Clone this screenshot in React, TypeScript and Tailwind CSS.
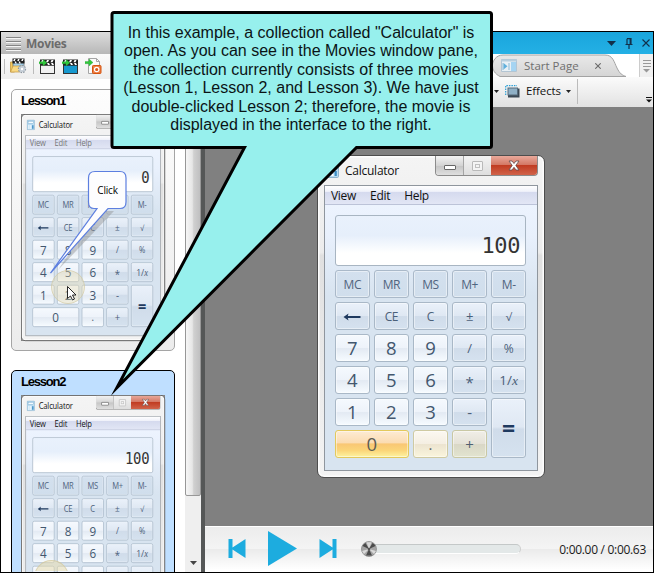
import React from "react";

const UI = "font-['Open_Sans','Noto_Sans',sans-serif]";

type Tone = "memory" | "digit" | "op" | "hot" | "warm" | "warmOp";

const tones: Record<Tone, string> = {
  memory: "border-[#aab9c9] bg-[linear-gradient(#d3e0ee,#d0deec)] text-[#51657f]",
  digit: "border-[#a9b8c7] bg-[linear-gradient(#f5f9fe_0%,#eef3fa_48%,#e3eaf3_52%,#f6fbff_100%)] text-[#43576e]",
  op: "border-[#a9b8c7] bg-[linear-gradient(#eaf1fa_0%,#dfe8f3_48%,#d0dcea_52%,#d5e2ef_100%)] text-[#4b6079]",
  hot: "border-[#e3c95c] bg-[linear-gradient(#fdebd3_0%,#fbdcb2_45%,#f9c774_50%,#fbd579_75%,#fdf3a0_100%)] text-[#5d5c54]",
  warm: "border-[#cfcaa2] bg-[linear-gradient(#fbf8f1_0%,#f5efe3_48%,#ece4d0_52%,#faf5dc_100%)] text-[#5c6468]",
  warmOp: "border-[#c9c8a4] bg-[linear-gradient(#f0eee7_0%,#e5e2d7_48%,#d9d7c6_52%,#e2e4cf_100%)] text-[#4f6070]",
};

function Key({ children, tone, className = "" }: { children: React.ReactNode; tone: Tone; className?: string }) {
  return (
    <div className={`flex min-w-0 items-center justify-center rounded-[3px] border-[1.5px] pt-[1px] font-medium shadow-[inset_0_0_0_1px_rgba(255,255,255,0.45)] leading-none ${tones[tone]} ${className}`}>
      {children}
    </div>
  );
}

function BackArrow() {
  return (
    <svg width="18" height="8" viewBox="0 0 18 8">
      <path d="M0.5 4 L5.5 0.5 L4.8 3 H17.5 V5 H4.8 L5.5 7.5 Z" fill="#1f3a5f" />
    </svg>
  );
}

function CalcIcon() {
  return (
    <svg width="13" height="15" viewBox="0 0 13 15">
      <rect x="0.5" y="0.5" width="12" height="14" rx="1.2" fill="#b9dcf2" stroke="#8fb3cb" />
      <rect x="2.2" y="2.2" width="8.6" height="3.6" fill="#f4fbff" stroke="#6fa7cc" strokeWidth="0.7" />
      <path d="M2.5 8h2v2h-2zM5.5 8h2v2h-2zM2.5 11h2v2h-2zM5.5 11h2v2h-2z" fill="#fff" />
      <path d="M8.6 8h2.2v5H8.6z" fill="#3e8ec4" />
    </svg>
  );
}

function WindowButtons({ active }: { active: boolean }) {
  return (
    <div className="flex h-[20px] w-[103px] rounded-b-[4px] border border-t-0 border-[#8b8b8b] overflow-hidden">
      <div className="flex w-[28px] items-center justify-center border-r border-[#a5a5a5] bg-[linear-gradient(#f3f3f3,#d4d4d4_50%,#c5c5c5_52%,#dfdfdf)]">
        <div className="mt-[3px] h-[5px] w-[12px] rounded-[1px] border border-[#666] bg-white" />
      </div>
      <div className="flex w-[27px] items-center justify-center bg-[linear-gradient(#f3f3f3,#dedede)]">
        <div className="h-[10px] w-[11px] rounded-[1px] border border-[#b9b9b9] bg-[#f4f4f4] p-[2px]">
          <div className="h-full w-full border border-[#c0c0c0]" />
        </div>
      </div>
      <div className={`flex flex-1 items-center justify-center ${active ? "bg-[linear-gradient(#e9a99b,#d47966_45%,#c13c22_50%,#d0634a)]" : "bg-[#dedede]"}`}>
        <svg width="12" height="11" viewBox="0 0 12 11">
          <path d="M1 1h3l2 2.5L8 1h3L7.8 5.4 11 10H8L6 7.3 4 10H1l3.2-4.6z" fill="#fff" stroke="#5f4a4c" strokeWidth="0.8" />
        </svg>
      </div>
    </div>
  );
}

function Calculator({ value, active = true, hot = false }: { value: string; active?: boolean; hot?: boolean }) {
  return (
    <div className={`h-[323px] w-[228px] rounded-[7px] border-[1.5px] border-[#4d4d4d] bg-[linear-gradient(#f4f4f4,#ececec_30%,#e0e0e0_31%,#f3f3f3)] px-[6px] pb-[6px] shadow-[inset_0_0_0_1.5px_#fdfdfd] ${UI}`}>
      <div className="flex h-[29px] pl-[2px]">
        <div className="flex flex-1 items-center gap-[6px]">
          <CalcIcon />
          <span className="text-[12px] tracking-[-0.25px] text-[#111]">Calculator</span>
        </div>
        <WindowButtons active={active} />
      </div>
      <div className="flex h-[286px] flex-col border-[1.5px] border-[#8f969e] bg-[linear-gradient(#eff5ff_0px,#e8f0fc_50px,#d8e4f0_110px)]">
        <div className={`flex h-[19px] shrink-0 items-center gap-[14px] border-b border-[#bcc3d8] bg-[linear-gradient(#ffffff,#f0f2fa_30%,#d5daee_35%,#e2e6f5)] pl-[6px] pt-[1px] text-[12px] tracking-[-0.3px] ${active ? "text-[#111]" : "text-[#777]"}`}>
          <span>View</span>
          <span>Edit</span>
          <span>Help</span>
        </div>
        <div className="pl-[10px] pr-[11px] pt-[10px]">
          <div className="flex h-[51px] items-end justify-end rounded-[3px] border-[1.5px] border-[#a8b5c2] bg-[linear-gradient(#e9f1fc,#e6effb_40%,#ffffff_75%)] pr-[5px] pb-[8px] font-['DejaVu_Sans_Mono',monospace] text-[22px] leading-[22px] tracking-[-0.4px] text-[#333]">
            {value}
          </div>
          <div className="mt-[4px] grid h-[188px] grid-cols-5 grid-rows-6 gap-x-[4.5px] gap-y-[4px] text-[18.5px]">
            {["MC", "MR", "MS", "M+", "M-"].map((k) => (
              <Key key={k} tone="memory" className="text-[12px] tracking-[-0.5px]">{k}</Key>
            ))}
            <Key tone="op"><BackArrow /></Key>
            <Key tone="op" className="text-[12px] tracking-[-0.5px]">CE</Key>
            <Key tone="op" className="text-[12px]">C</Key>
            <Key tone="op" className="text-[13px]">±</Key>
            <Key tone="op" className="text-[11px]">√</Key>
            <Key tone="digit">7</Key>
            <Key tone="digit">8</Key>
            <Key tone="digit">9</Key>
            <Key tone="op" className="text-[13px]">/</Key>
            <Key tone="op" className="text-[12px]">%</Key>
            <Key tone="digit">4</Key>
            <Key tone="digit">5</Key>
            <Key tone="digit">6</Key>
            <Key tone="op" className="pt-[5px] text-[15px]">*</Key>
            <Key tone="op" className="text-[13.5px]">1/<i className="font-['Liberation_Serif',serif]">x</i></Key>
            <Key tone="digit">1</Key>
            <Key tone="digit">2</Key>
            <Key tone="digit">3</Key>
            <Key tone="op" className="text-[15px]">-</Key>
            <Key tone="op" className="row-span-2">
              <span className="text-[23px] font-bold leading-none text-[#1f3a5f]">=</span>
            </Key>
            <Key tone={hot ? "hot" : "digit"} className="col-span-2">0</Key>
            <Key tone={hot ? "warm" : "digit"} className="text-[15px]">.</Key>
            <Key tone={hot ? "warmOp" : "op"} className="text-[15px]">+</Key>
          </div>
        </div>
      </div>
    </div>
  );
}

function MovieCard({ title, selected, value }: { title: string; selected?: boolean; value: string }) {
  return (
    <div className={`h-[262px] w-[164px] shrink-0 rounded-[5px] border pl-[9px] ${selected ? "border-black bg-[#bfdfff]" : "border-[#a5a5a5] bg-[linear-gradient(#fdfdfd,#ececec)]"}`}>
      <div className="h-[24px] pt-[3px] font-['Liberation_Sans',Arial,sans-serif] text-[13px] font-bold leading-[16px] tracking-[-1.2px] text-black">{title}</div>
      <div className="h-[227px] w-[144px] bg-[#858585]">
        <div className="h-[323px] w-[228px] origin-top-left scale-x-[0.632] scale-y-[0.703]">
          <Calculator value={value} active={!!selected} />
        </div>
      </div>
    </div>
  );
}

function Clapper({ body }: { body: string }) {
  return (
    <svg width="17" height="15" viewBox="0 0 17 15">
      <rect x="1.5" y="6" width="14" height="8.5" fill={body} stroke="#333" />
      <rect x="1" y="0.5" width="15" height="6" fill="#222" />
      <path d="M3 1h2l-1 2.200H2zM8 1h2L9 3.200H7zM12.500 1h2l-1 2.200h-2zM8 4h2l1 2H9zM12 4h2l1 2h-2z" fill="#fff" />
      <path d="M0 2.800h4V.500L8 3.800 4 7V4.800H0z" fill="#32c83c" stroke="#1e9a2b" strokeWidth="0.3" />
    </svg>
  );
}

function FolderMovie() {
  return (
    <svg width="17" height="16" viewBox="0 0 17 16">
      <path d="M.5 4h4v10h-4z" fill="#f4c95b" stroke="#c79a40" strokeWidth="0.8" />
      <path d="M3 3h11v10H3z" fill="#a3cfe9" stroke="#666" strokeWidth="0.7" />
      <path d="M2.500 .5h12v5h-12z" fill="#222" />
      <path d="M4 1h1.600l-.8 2H3.200zM8 1h1.600l-.8 2H7.200zM12 1h1.600l-.8 2h-1.600zM4.500 3.500H6l.8 2H5.300zM8.500 3.500H10l.8 2H9.300z" fill="#fff" />
      <path d="M.5 14L3 8h9l-2 6z" fill="#f9d984" stroke="#c49a42" strokeWidth="0.7" />
      <circle cx="12" cy="11" r="3.300" fill="#d6dce2" stroke="#8d97a1" strokeWidth="1.700" strokeDasharray="1.500 1" />
      <circle cx="12" cy="11" r="3" fill="#c5ced7" />
      <circle cx="12" cy="11" r="1.200" fill="#fff" />
    </svg>
  );
}

function ImportSlides() {
  return (
    <svg width="17" height="17" viewBox="0 0 17 17">
      <path d="M3.500 .5h8l3 3v12h-11z" fill="#fbfbfb" stroke="#a5a5a5" />
      <path d="M11.500 .5v3h3" fill="none" stroke="#a5a5a5" />
      <rect x="7.500" y="7.500" width="8.500" height="8" rx="0.800" fill="#ee7c42" stroke="#d4530e" />
      <circle cx="11.700" cy="11.500" r="2.200" fill="#d9591b" stroke="#fff" strokeWidth="1.200" />
      <path d="M0 3.500h4V1l4 3.500-4 3.500V5.700H0z" fill="#32c83c" stroke="#1e9a2b" strokeWidth="0.3" />
    </svg>
  );
}

function MoviesPane() {
  return (
    <div className="flex w-[200px] flex-col bg-white">
      <div className="flex h-[22px] shrink-0 items-center bg-[linear-gradient(#dddddd,#b7b7b7)] pl-[5px]">
        <div className="flex w-[15px] flex-col gap-[3px]">
          {[0, 1, 2, 3].map((i) => (
            <div key={i} className="h-px bg-[#858585] shadow-[0_1px_0_#f4f4f4]" />
          ))}
        </div>
        <span className={`ml-[5px] pt-[1px] text-[12px] font-bold leading-none tracking-[-0.3px] text-[#6c6c6c] ${UI}`}>Movies</span>
      </div>
      <div className="flex h-[25px] shrink-0 items-center bg-[linear-gradient(#fbfbfb,#ededed)] pb-[1px] pl-[3px]">
        <div className="h-[15px] w-px bg-[#bbb]" />
        <div className="ml-[5px]"><FolderMovie /></div>
        <div className="ml-[6px] h-[15px] w-px bg-[#bbb]" />
        <div className="ml-[5px]"><Clapper body="#f1f1f1" /></div>
        <div className="ml-[6px]"><Clapper body="#1799cf" /></div>
        <div className="ml-[6px]"><ImportSlides /></div>
      </div>
      <div className="flex min-h-0 flex-1">
        <div className="flex w-[184px] flex-col gap-[19px] overflow-hidden pl-[10px] pt-[10px]">
          <MovieCard title="Lesson1" value="0" />
          <MovieCard title="Lesson2" value="100" selected />
        </div>
        <div className="flex w-[16px] flex-col bg-[#efefef]">
          <div className="h-[417px] rounded-b-[2px] border border-[#979797] bg-[linear-gradient(90deg,#f6f6f6,#e6e6e6_45%,#d0d0d0_55%,#bfbfc0)]" />
          <div className="flex flex-1 items-end justify-center pb-[7px]">
            <svg width="7" height="4" viewBox="0 0 7 4"><path d="M0 0h7L3.500 4z" fill="#444" /></svg>
          </div>
        </div>
      </div>
    </div>
  );
}

function TitleBar() {
  return (
    <div className="flex h-[22px] shrink-0 items-center justify-end bg-[linear-gradient(#1aa5dc,#24b0e5)] pr-[3px]">
      <svg width="9" height="5" viewBox="0 0 9 5"><path d="M0 0h9L4.500 5z" fill="#12304a" /></svg>
      <svg className="ml-[9px]" width="8" height="11" viewBox="0 0 8 11">
        <path d="M2 .7h4V6.500M2 .7V6.500M5.200 .7V6.500M.5 6.500h7M4 6.500V11" fill="none" stroke="#12304a" strokeWidth="1.200" />
      </svg>
      <svg className="ml-[9px]" width="8" height="8" viewBox="0 0 8 8"><path d="M.5 .5l7 7M7.500 .5l-7 7" stroke="#12304a" strokeWidth="1.100" /></svg>
    </div>
  );
}

function TabStrip() {
  return (
    <div className={`flex h-[23px] shrink-0 justify-end bg-white ${UI}`}>
      <div className="relative h-[23px] w-[134px]">
        <svg className="absolute inset-0" width="134" height="23" viewBox="0 0 134 23">
          <defs>
            <linearGradient id="tab" x1="0" y1="0" x2="0" y2="1">
              <stop offset="0" stopColor="#e9e9e9" />
              <stop offset="1" stopColor="#d5d5d5" />
            </linearGradient>
          </defs>
          <path d="M8 22.500C3 20 .5 16 .5 11.500S4 1 11 1H113C121 1 122 8 125 14S130 21 134 22.500Z" fill="url(#tab)" stroke="#a3a3a3" />
        </svg>
        <div className="relative flex h-full items-center pl-[9px]">
          <svg width="16" height="13" viewBox="0 0 16 13">
            <path d="M.5 .5h15v12H.5z" fill="#e8f0f5" stroke="#b3c5d3" />
            <path d="M.5 .5h15v2H.5z" fill="#b8cedd" />
            <path d="M10 3h5v9h-5z" fill="#a5d4f2" />
            <path d="M2.500 4L6.500 7.300 2.500 10.500z" fill="#5fb0dd" />
            <path d="M2 4v7M8 4v7" stroke="#8bbad6" />
          </svg>
          <span className="ml-[7px] w-[55px] whitespace-nowrap text-[11.5px] leading-none text-[#6f6f6f]">Start Page</span>
          <svg className="ml-[16px]" width="6" height="6" viewBox="0 0 6 6"><path d="M.3 .3l5.400 5.400M5.700 .3L.3 5.700" stroke="#6a6a6a" strokeWidth="1.100" /></svg>
        </div>
      </div>
      <div className="ml-[13px] flex w-[14px] flex-col items-center gap-[2px] border-l border-[#ccc] bg-[#f0f0f0] pt-[6px]">
        <div className="h-px w-[8px] bg-[#999]" />
        <div className="h-px w-[8px] bg-[#999]" />
        <div className="h-px w-[8px] bg-[#999]" />
        <svg width="7" height="4" viewBox="0 0 7 4"><path d="M0 0h7L3.500 3.500z" fill="#999" /></svg>
      </div>
    </div>
  );
}

function EffectsBar() {
  return (
    <div className={`flex h-[30px] shrink-0 items-center bg-[linear-gradient(#fbfbfb,#e2e2e2)] pb-[2px] pl-[289px] ${UI}`}>
      <svg width="5" height="3" viewBox="0 0 5 3"><path d="M0 0h5L2.500 3z" fill="#222" /></svg>
      <svg className="ml-[6px]" width="15" height="13" viewBox="0 0 15 13">
        <path d="M.7 10V.7H12" fill="none" stroke="#2a9fd6" strokeWidth="1.200" strokeDasharray="1.500 1" />
        <rect x="3" y="3.500" width="11.500" height="9" fill="#3a4854" />
        <rect x="3" y="3" width="9.500" height="7" fill="#8fb0c6" stroke="#566b7b" />
      </svg>
      <span className="ml-[6px] w-[35px] text-[11.5px] leading-none tracking-[-0.1px] text-[#111]">Effects</span>
      <svg className="ml-[5px]" width="5" height="3" viewBox="0 0 5 3"><path d="M0 0h5L2.500 3z" fill="#222" /></svg>
      <div className="ml-[6px] h-[25px] w-px bg-[#bbb]" />
      <svg className="ml-auto mr-[1px] mt-[18px]" width="6" height="6" viewBox="0 0 6 6"><path d="M0 .5h6" stroke="#111" /><path d="M0 2.500h6L3 5.500z" fill="#111" /></svg>
    </div>
  );
}

function Player() {
  return (
    <div className={`flex h-[46px] shrink-0 items-center border-t border-white bg-[linear-gradient(#ececec,#f4f4f4_48%,#ebebeb_50%,#ffffff_95%)] pb-[2px] pl-[23px] pr-[7px] ${UI}`}>
      <svg width="18" height="19" viewBox="0 0 18 19"><path d="M.5 0h4v8.500L17.500 0v19L4.500 10.500V19h-4z" fill="#1dacdf" /></svg>
      <svg className="ml-[22px]" width="29" height="35" viewBox="0 0 29 35"><path d="M0 0L29 17.500 0 35z" fill="#1dacdf" /></svg>
      <svg className="ml-[22px]" width="18" height="19" viewBox="0 0 18 19"><path d="M17.500 0h-4v8.500L.5 0v19l13-8.500V19h4z" fill="#1dacdf" /></svg>
      <div className="ml-[24px] flex h-[10px] w-[160px] items-center rounded-full border border-t-[#c4c8c8] border-l-[#d5d5d5] border-r-[#cfcfcf] border-b-white bg-[#e3e8e8]">
        <svg width="16" height="16" className="-ml-[1px] shrink-0" viewBox="0 0 16 16">
          <circle cx="8" cy="8" r="7.500" fill="#a4a4a4" stroke="#858585" strokeWidth="0.7" />
          <path d="M8 8L1.500 5A7 7 0 0 1 4.500 2ZM8 8L11.500 2A7 7 0 0 1 14.500 5ZM8 8L5 14.500 11 14.500Z" fill="#4b4b4b" />
          <path d="M8 8L5.500 1.300H10.500ZM8 8L1 10 3 13ZM8 8L15 10 13 13Z" fill="#d9d9d9" />
          <circle cx="8" cy="8" r="1.300" fill="#555" />
        </svg>
      </div>
      <span className="ml-auto whitespace-nowrap pt-[2px] text-[12px] tracking-[-0.3px] text-[#1b1b1b]">0:00.00 / 0:00.63</span>
    </div>
  );
}

function ClickCallout() {
  return (
    <div className="absolute left-[48px] top-[168px] h-[142px] w-[84px]">
      <svg width="84" height="142" viewBox="0 0 84 142">
        <circle cx="20" cy="119" r="16.500" fill="#e8d9a8" fillOpacity="0.35" stroke="#cfc49a" strokeOpacity="0.6" />
        <path d="M50 43L66 43 10 102Z" fill="#888" opacity="0.4" />
        <path d="M47 3.500H72Q78 3.500 78 10V34Q78 40.500 72 40.500H60L2.500 105 49 40.500H46Q40.500 40.500 40.500 34V10Q40.500 3.500 47 3.500Z" fill="#fdfdfe" stroke="#5d7fe0" strokeWidth="1.200" />
        <path d="M19.500 118.500V130.500L22.500 128 24.500 132 26.500 131 24.500 127H28Z" fill="#fff" stroke="#111" strokeWidth="0.9" />
      </svg>
      <span className={`absolute left-[41px] top-[15px] w-[37px] text-center text-[10px] leading-[15px] tracking-[-0.2px] text-black ${UI}`}>Click</span>
    </div>
  );
}

function Callout() {
  return (
    <div className="absolute inset-0">
      <svg className="absolute inset-0" width="654" height="573" viewBox="0 0 654 573">
        <path d="M114 12.500H489.500Q491.500 12.500 491.500 14.500V145.500Q491.500 147.500 489.500 147.500H356.500L117 387.500 244.500 147.500H114Q112 147.500 112 145.500V14.500Q112 12.500 114 12.500Z" fill="#97f0ed" stroke="#000" strokeWidth="3" strokeMiterlimit="10" />
      </svg>
      <div className="absolute left-[110px] top-[24px] w-[382px] text-center font-['Liberation_Sans',Arial,sans-serif] text-[16px] leading-[18.400px] text-[#0b1416]">
        <div>In this example, a collection called "Calculator" is</div>
        <div>open. As you can see in the Movies window pane,</div>
        <div>the collection currently consists of three movies</div>
        <div>(Lesson 1, Lesson 2, and Lesson 3). We have just</div>
        <div>double-clicked Lesson 2; therefore, the movie is</div>
        <div>displayed in the interface to the right.</div>
      </div>
    </div>
  );
}

export default function App() {
  return (
    <div className="relative h-[573px] w-[654px] overflow-hidden bg-white pt-[31px]">
      <div className="flex h-[542px] w-[654px] border border-black">
        <MoviesPane />
        <div className="w-[4px] shrink-0 bg-[#555757]" />
        <div className="flex min-w-0 flex-1 flex-col bg-[#808080]">
          <TitleBar />
          <TabStrip />
          <EffectsBar />
          <div className="min-h-0 flex-1 pl-[112px] pt-[48px]">
            <Calculator value="100" hot />
          </div>
          <Player />
        </div>
      </div>
      <div className="absolute left-[34px] top-[560px] h-[11px] w-[35px] overflow-hidden">
        <div className="h-[35px] w-[35px] rounded-full border border-[#cfc49a]/60 bg-[#e8d9a8]/50" />
      </div>
      <ClickCallout />
      <Callout />
    </div>
  );
}
